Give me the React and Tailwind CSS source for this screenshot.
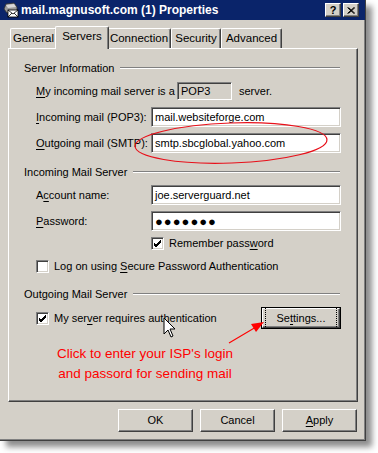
import React from 'react';

const raised = 'border border-t-white border-l-white border-b-[#404040] border-r-[#404040] shadow-[inset_-1px_-1px_0_#808080,inset_1px_1px_0_#d4d0c8]';
const sunken = 'border border-t-[#808080] border-l-[#808080] border-b-white border-r-white shadow-[inset_1px_1px_0_#404040,inset_-1px_-1px_0_#d4d0c8]';

const U = ({ children }) => <span className="underline underline-offset-2">{children}</span>;

const Heading = ({ children, className = '' }) => (
  <div className={`flex items-center h-[14px] pl-[15px] pr-[17px] ${className}`}>
    <span className="whitespace-nowrap">{children}</span>
    <div className="flex-1 ml-[6px] h-[2px] border-t border-t-[#808080] border-b border-b-white" />
  </div>
);

const Field = ({ label, value, className = '' }) => (
  <div className={`flex items-center h-[20px] pl-[27px] ${className}`}>
    <span className="w-[115px] whitespace-nowrap">{label}</span>
    <div className={`w-[190px] h-[20px] bg-white flex items-center px-[3px] ${sunken}`}>{value}</div>
  </div>
);

const Check = ({ checked }) => (
  <div className={`w-[13px] h-[13px] bg-white flex items-center justify-center shrink-0 ${sunken}`}>
    {checked && (
      <svg width="9" height="9" viewBox="0 0 9 9">
        <path d="M1 4 L3 6 L8 1 M1 5 L3 7 L8 2 M1 6 L3 8 L8 3" stroke="#000" strokeWidth="1" fill="none" />
      </svg>
    )}
  </div>
);

const Tab = ({ label, active, w }) => (
  <div
    className={`flex items-center justify-center border-t border-l border-t-white border-l-white border-r border-r-[#404040] rounded-t-[2px] shadow-[inset_-1px_0_0_#808080] ${
      active ? 'h-[23px] -mx-[2px] z-10 bg-[#d4d0c8] -mb-[1px] pb-[3px]' : 'h-[20px]'
    }`}
    style={{ width: w }}
  >
    {label}
  </div>
);

const Button = ({ children }) => (
  <div className={`w-[75px] h-[23px] flex items-center justify-center ${raised}`}>{children}</div>
);

export default function App() {
  return (
    <div className="w-[378px] h-[453px] bg-white overflow-hidden" style={{ fontFamily: '"Liberation Sans", Arial, sans-serif' }}>
      <div className="relative w-[366px] h-[441px] bg-[#d4d0c8] border-r border-b border-r-[#404040] border-b-[#404040] shadow-[inset_-1px_-1px_0_#808080,6px_6px_6px_rgba(0,0,0,0.45)] text-[11px] text-black">
        {/* title bar */}
        <div className="h-[20px] bg-[#0a246a] flex items-center pl-[3px] pr-[6px]">
          <svg width="16" height="16" viewBox="0 0 16 16" className="shrink-0">
            <path d="M1 7 L3 2 L11 1 L14 5 L14 9 L4 11 Z" fill="#9a9a9a" stroke="#303030" strokeWidth="0.8" />
            <path d="M3 3 L11 2 L13 5 L5 6 Z" fill="#d8d8d8" />
            <rect x="5" y="8" width="10" height="7" fill="#fff" stroke="#000" strokeWidth="0.8" />
            <path d="M5 8 L10 12 L15 8 M5 15 L9 11 M15 15 L11 11" stroke="#000" strokeWidth="0.8" fill="none" />
          </svg>
          <span className="ml-[2px] text-white font-bold text-[12px] whitespace-nowrap">mail.magnusoft.com (1) Properties</span>
          <div className="flex-1" />
          <div className={`w-[16px] h-[14px] flex items-center justify-center bg-[#d4d0c8] font-bold text-[11px] ${raised}`}>?</div>
          <div className={`ml-[2px] w-[16px] h-[14px] flex items-center justify-center bg-[#d4d0c8] ${raised}`}>
            <svg width="8" height="7" viewBox="0 0 8 7">
              <path d="M0.5 0.5 L7 6.5 M1.5 0.5 L8 6.5 M7 0.5 L0.5 6.5 M8 0.5 L1.5 6.5" stroke="#000" strokeWidth="1" />
            </svg>
          </div>
        </div>

        {/* tabs */}
        <div className="flex items-end h-[28px] pl-[10px] relative z-10 text-[11.5px]">
          <Tab label="General" w={47} />
          <Tab label="Servers" w={54} active />
          <Tab label="Connection" w={64} />
          <Tab label="Security" w={50} />
          <Tab label="Advanced" w={61} />
        </div>

        {/* panel */}
        <div className="mx-[8px] w-[350px] h-[354px] border border-t-white border-l-white border-b-[#404040] border-r-[#404040] shadow-[inset_-1px_-1px_0_#808080] relative">
          <Heading className="mt-[12px]">Server Information</Heading>
          <div className="flex items-center h-[18px] pl-[27px] mt-[7px]">
            <span className="w-[141px] whitespace-nowrap"><U>M</U>y incoming mail server is a</span>
            <div className={`w-[55px] h-[18px] flex items-center px-[3px] ${sunken}`}>POP3</div>
            <span className="ml-[7px]">server.</span>
          </div>
          <Field className="mt-[7px]" label={<><U>I</U>ncoming mail (POP3):</>} value="mail.websiteforge.com" />
          <Field className="mt-[6px]" label={<><U>O</U>utgoing mail (SMTP):</>} value="smtp.sbcglobal.yahoo.com" />

          <Heading className="mt-[12px]">Incoming Mail Server</Heading>
          <Field className="mt-[6px]" label={<>A<U>c</U>count name:</>} value="joe.serverguard.net" />
          <Field
            className="mt-[6px]"
            label={<><U>P</U>assword:</>}
            value={<span className="text-[13px] tracking-[1px] leading-none">●●●●●●●</span>}
          />
          <div className="flex items-center h-[13px] pl-[142px] mt-[6px]">
            <Check checked />
            <span className="ml-[5px]">Remember pass<U>w</U>ord</span>
          </div>
          <div className="flex items-center h-[13px] pl-[27px] mt-[10px]">
            <Check />
            <span className="ml-[5px]">Log on using <U>S</U>ecure Password Authentication</span>
          </div>

          <Heading className="mt-[14px]">Outgoing Mail Server</Heading>
          <div className="flex items-center h-[22px] pl-[27px] mt-[6px]">
            <Check checked />
            <span className="ml-[5px] w-[207px]">My ser<U>v</U>er requires authentication</span>
            <div className="w-[80px] h-[22px] border border-black">
              <div className={`w-full h-full flex items-center justify-center ${raised}`}>
                <span className="outline outline-1 outline-dotted outline-black outline-offset-[2px] px-[9px]">Se<U>t</U>tings...</span>
              </div>
            </div>
          </div>
          <div className="mt-[15px] pl-[41px] w-[231px] text-center text-[13.5px] leading-[20px] text-[#ff0000]">
            Click to enter your ISP's login<br />and passord for sending mail
          </div>

          {/* annotations */}
          <svg className="absolute left-[-9px] top-[-49px] pointer-events-none" width="366" height="441" viewBox="0 0 366 441">
            <ellipse cx="231" cy="143" rx="96" ry="20" fill="none" stroke="#e8101a" strokeWidth="1.2" transform="rotate(-2 231 143)" />
            <path d="M229 343 L256 327" stroke="#ff0000" strokeWidth="1.2" />
            <path d="M264 322 L251 324 L256 332 Z" fill="#ff0000" />
            <path d="M164 318 L164 334 L168 330 L171 337 L173 336 L170 329 L175 329 Z" fill="#fff" stroke="#000" strokeWidth="1" />
          </svg>
        </div>

        {/* buttons */}
        <div className="flex justify-end gap-[7px] pr-[8px] mt-[7px]">
          <Button>OK</Button>
          <Button>Cancel</Button>
          <Button><U>A</U>pply</Button>
        </div>
      </div>
    </div>
  );
}
